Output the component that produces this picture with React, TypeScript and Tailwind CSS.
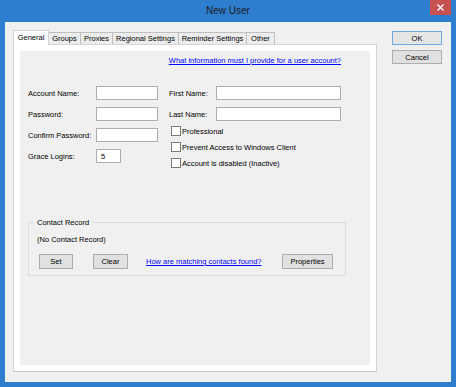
import React from 'react'

const tabs = [
  { label: 'Groups', w: 'w-[32px]' },
  { label: 'Proxies', w: 'w-[32px]' },
  { label: 'Regional Settings', w: 'w-[66px]' },
  { label: 'Reminder Settings', w: 'w-[68px]' },
  { label: 'Other', w: 'w-[28px]' },
]

function Btn({ label, className = '' }: { label: string; className?: string }) {
  return (
    <button
      className={`h-[15px] bg-[#e1e1e1] border border-[#adadad] flex items-center justify-center text-black ${className}`}
    >
      {label}
    </button>
  )
}

function TextBox({ w, value = '' }: { w: string; value?: string }) {
  return (
    <div className={`${w} h-[14px] bg-white border border-[#abadb3] flex items-center pl-[4px]`}>{value}</div>
  )
}

function Check({ label }: { label: string }) {
  return (
    <div className="h-[16px] flex items-center">
      <div className="ml-[2px] w-[10px] h-[10px] bg-white border border-[#7a7a7a]" />
      <span className="ml-[1px]">{label}</span>
    </div>
  )
}

export default function App() {
  return (
    <div className="w-[456px] h-[387px] bg-[#2e7ecf] flex flex-col font-['Liberation_Sans',Arial,sans-serif] text-[7.5px] leading-[9px] text-black">
      {/* title bar */}
      <div className="h-[22px] relative flex items-center justify-center text-black">
        <span className="text-[10px] leading-[12px] text-[#1a1a1a]">New User</span>
        <div className="absolute right-[5px] top-0 w-[21px] h-[15px] bg-[#c75050] flex items-center justify-center">
          <svg width="7" height="7" viewBox="0 0 7 7">
            <path d="M0.5 0.5L6.5 6.5M6.5 0.5L0.5 6.5" stroke="white" strokeWidth="1.4" />
          </svg>
        </div>
      </div>

      {/* client */}
      <div className="mx-[5px] mb-[5px] flex-1 bg-[#f0f0f0] flex">
        <div className="pl-[8px] pt-[8px] flex flex-col">
          {/* tabs */}
          <div className="h-[14px] flex items-end">
            <div className="relative z-10 w-[36px] h-[15px] -mb-px bg-white border border-b-0 border-[#d5d5d5] flex items-center justify-center pb-[2px]">
              General
            </div>
            {tabs.map(t => (
              <div
                key={t.label}
                className={`${t.w} h-[12px] bg-[#ececec] border border-b-0 border-l-0 border-[#bfbfbf] flex items-center justify-center`}
              >
                {t.label}
              </div>
            ))}
          </div>

          {/* panel */}
          <div className="w-[364px] h-[328px] bg-white border border-[#d5d5d5] border-b-[#cacaca] p-[6px]">
            <div className="h-full bg-[#f0f0f0] flex flex-col">
              <div className="pt-[5px] pr-[29px] flex justify-end">
                <span className="text-[#0000ff] underline">What information must I provide for a user account?</span>
              </div>

              <div className="mt-[21px] px-[8px] flex">
                <div className="w-[130px] flex flex-col gap-[7px]">
                  <div className="flex items-center">
                    <span className="w-[68px]">Account Name:</span>
                    <TextBox w="w-[62px]" />
                  </div>
                  <div className="flex items-center">
                    <span className="w-[68px]">Password:</span>
                    <TextBox w="w-[62px]" />
                  </div>
                  <div className="flex items-center">
                    <span className="w-[68px]">Confirm Password:</span>
                    <TextBox w="w-[62px]" />
                  </div>
                  <div className="flex items-center">
                    <span className="w-[68px]">Grace Logins:</span>
                    <TextBox w="w-[25px]" value="5" />
                  </div>
                </div>

                <div className="ml-[11px] flex flex-col">
                  <div className="flex flex-col gap-[7px]">
                    <div className="flex items-center">
                      <span className="w-[47px]">First Name:</span>
                      <TextBox w="w-[125px]" />
                    </div>
                    <div className="flex items-center">
                      <span className="w-[47px]">Last Name:</span>
                      <TextBox w="w-[125px]" />
                    </div>
                  </div>
                  <div className="mt-[2px] flex flex-col">
                    <Check label="Professional" />
                    <Check label="Prevent Access to Windows Client" />
                    <Check label="Account is disabled (Inactive)" />
                  </div>
                </div>
              </div>

              <fieldset className="mt-[47px] ml-[8px] w-[318px] border border-[#dcdcdc] pl-[8px] pr-[12px] pb-[6px]">
                <legend className="-ml-[3px] px-[3px]">Contact Record</legend>
                <div className="mt-[8px]">(No Contact Record)</div>
                <div className="mt-[10px] flex items-center">
                  <Btn label="Set" className="ml-[2px] w-[34px]" />
                  <Btn label="Clear" className="ml-[20px] w-[35px]" />
                  <span className="ml-[18px] text-[#0000ff] underline">How are matching contacts found?</span>
                  <Btn label="Properties" className="ml-auto w-[51px]" />
                </div>
              </fieldset>
            </div>
          </div>
        </div>

        {/* dialog buttons */}
        <div className="ml-[15px] pt-[9px] flex flex-col gap-[5px]">
          <button className="w-[50px] h-[14px] bg-[#e5e5e5] border border-[#6fa7e0] flex items-center justify-center">
            OK
          </button>
          <button className="w-[50px] h-[14px] bg-[#e1e1e1] border border-[#adadad] flex items-center justify-center">
            Cancel
          </button>
        </div>
      </div>
    </div>
  )
}
